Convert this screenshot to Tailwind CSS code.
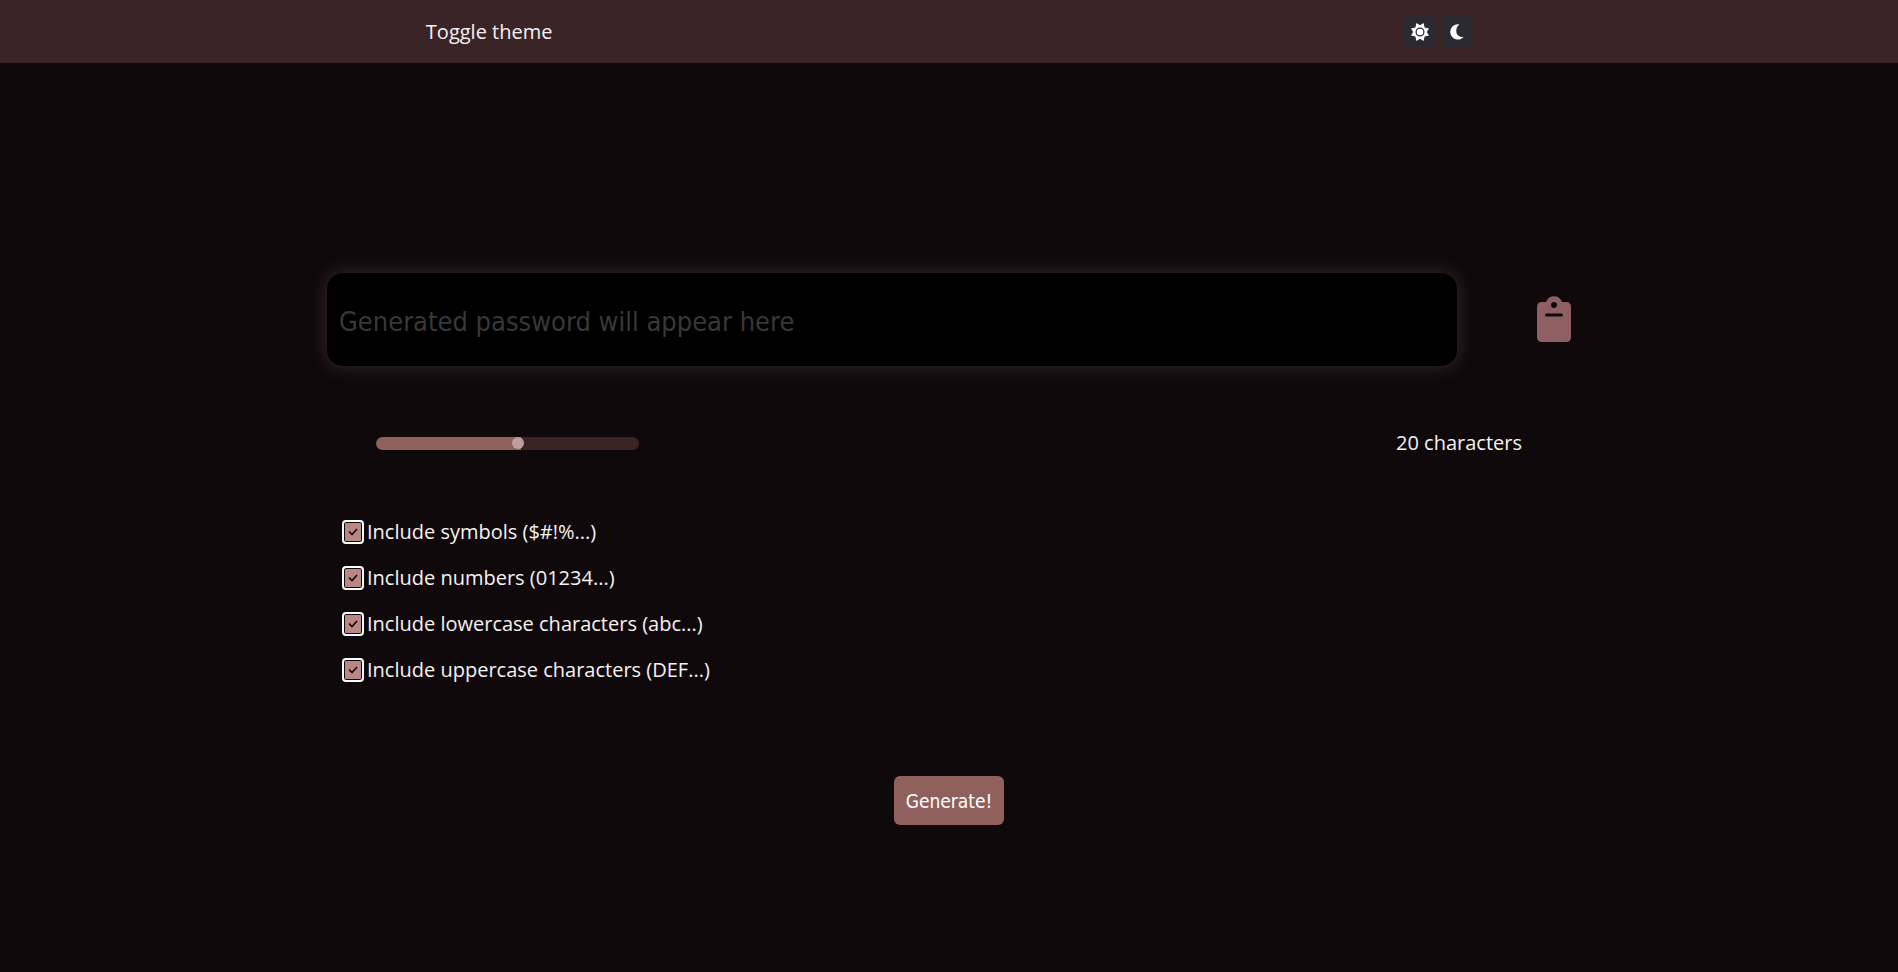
<!DOCTYPE html>
<html lang="en">
<head>
<meta charset="utf-8">
<meta name="viewport" content="width=device-width, initial-scale=1">
<title>Password generator</title>
<script src="https://cdn.jsdelivr.net/npm/@tailwindcss/browser@4"></script>
</head>
<body class="min-h-screen bg-[#0f090b] font-['Open_Sans',sans-serif] text-xl text-[#f7f2f2]">
<header class="flex h-[63px] items-center justify-around bg-[#3a2426]">
  <span>Toggle theme</span>
  <div class="flex gap-1.5">
    <button type="button" aria-label="Light theme" class="flex size-[31px] items-center justify-center rounded-lg bg-[#2b2a33]">
      <svg viewBox="0 0 20 20" class="size-5" aria-hidden="true"><path fill="#fff" d="M10 3.2 13.6 1 14.6 5.4 19 6.4 16.8 10 19 13.6 14.6 14.6 13.6 19 10 16.8 6.4 19 5.4 14.6 1 13.6 3.2 10 1 6.4 5.4 5.4 6.4 1Z"/><circle cx="10" cy="10" r="3.9" fill="#fff" stroke="#2b2a33" stroke-width="1.3"/></svg>
    </button>
    <button type="button" aria-label="Dark theme" class="flex size-[31px] items-center justify-center rounded-lg bg-[#2b2a33]">
      <svg viewBox="0 0 20 20" class="size-5" aria-hidden="true"><path fill="#fff" d="M11.4 2.2A7.7 7.7 0 1 0 16.9 14.8C12.7 15.7 9.3 12.8 9.3 8.9C9.3 6.2 10.3 4.1 12.2 2.8Q12.3 2.2 11.4 2.2Z"/></svg>
    </button>
  </div>
</header>
<main class="mx-auto flex w-full max-w-[1244px] flex-col pt-[210px]">
  <div class="flex items-center justify-between gap-20">
    <input type="text" readonly aria-label="Generated password" placeholder="Generated password will appear here" class="h-[93px] min-w-0 flex-1 rounded-2xl bg-black px-3 pt-1 font-['DejaVu_Sans_Condensed','DejaVu_Sans',sans-serif] text-[27px] shadow-[0_0_16px_2px_#33232a] outline-none placeholder:text-[#383838]">
    <button type="button" aria-label="Copy password" class="shrink-0 pb-0.5">
      <svg viewBox="0 0 34 46" class="h-[46px] w-[34px]" aria-hidden="true"><path fill="#8f6063" d="M5 6H9A8.5 8.5 0 0 1 25 6H29Q34 6 34 11V41Q34 46 29 46H5Q0 46 0 41V11Q0 6 5 6Z"/><circle cx="17" cy="9" r="3" fill="#0f090b"/><path d="M9.5 19H24.5" stroke="#0f090b" stroke-width="3" stroke-linecap="round"/></svg>
    </button>
  </div>
  <div class="mt-[63px] flex items-center justify-between px-[49px]">
    <input type="range" min="1" max="36" value="20" aria-label="Password length" class="h-[13px] w-[263px] appearance-none rounded-full bg-linear-to-r from-[#8f605c] from-55% to-[#3a2426] to-55% [&::-webkit-slider-thumb]:size-3 [&::-webkit-slider-thumb]:appearance-none [&::-webkit-slider-thumb]:rounded-full [&::-webkit-slider-thumb]:bg-[#c09c9a]">
    <output>20 characters</output>
  </div>
  <div class="mt-[61px] flex flex-col items-start gap-[18px] px-[15px]">
    <label class="flex items-center gap-[3px]"><span class="relative flex h-6 w-[22px]"><input type="checkbox" checked class="h-6 w-[22px] appearance-none rounded border-2 border-white bg-[#b98784] shadow-[inset_0_0_0_1px_#0f090b]"><svg viewBox="0 0 10 8" class="pointer-events-none absolute inset-x-1.5 top-2 h-2 w-2.5" fill="none" stroke="#0f090b" stroke-width="1.6" aria-hidden="true"><path d="M1 3.5 4 6.5 9 1"/></svg></span>Include symbols ($#!%...)</label>
    <label class="flex items-center gap-[3px]"><span class="relative flex h-6 w-[22px]"><input type="checkbox" checked class="h-6 w-[22px] appearance-none rounded border-2 border-white bg-[#b98784] shadow-[inset_0_0_0_1px_#0f090b]"><svg viewBox="0 0 10 8" class="pointer-events-none absolute inset-x-1.5 top-2 h-2 w-2.5" fill="none" stroke="#0f090b" stroke-width="1.6" aria-hidden="true"><path d="M1 3.5 4 6.5 9 1"/></svg></span>Include numbers (01234...)</label>
    <label class="flex items-center gap-[3px]"><span class="relative flex h-6 w-[22px]"><input type="checkbox" checked class="h-6 w-[22px] appearance-none rounded border-2 border-white bg-[#b98784] shadow-[inset_0_0_0_1px_#0f090b]"><svg viewBox="0 0 10 8" class="pointer-events-none absolute inset-x-1.5 top-2 h-2 w-2.5" fill="none" stroke="#0f090b" stroke-width="1.6" aria-hidden="true"><path d="M1 3.5 4 6.5 9 1"/></svg></span>Include lowercase characters (abc...)</label>
    <label class="flex items-center gap-[3px]"><span class="relative flex h-6 w-[22px]"><input type="checkbox" checked class="h-6 w-[22px] appearance-none rounded border-2 border-white bg-[#b98784] shadow-[inset_0_0_0_1px_#0f090b]"><svg viewBox="0 0 10 8" class="pointer-events-none absolute inset-x-1.5 top-2 h-2 w-2.5" fill="none" stroke="#0f090b" stroke-width="1.6" aria-hidden="true"><path d="M1 3.5 4 6.5 9 1"/></svg></span>Include uppercase characters (DEF...)</label>
  </div>
  <button type="button" class="mt-[92px] h-[49px] self-center rounded-md bg-[#8f605c] px-3 pt-0.5 font-['DejaVu_Sans_Condensed','DejaVu_Sans',sans-serif] text-[19px] text-white">Generate!</button>
</main>
</body>
</html>
